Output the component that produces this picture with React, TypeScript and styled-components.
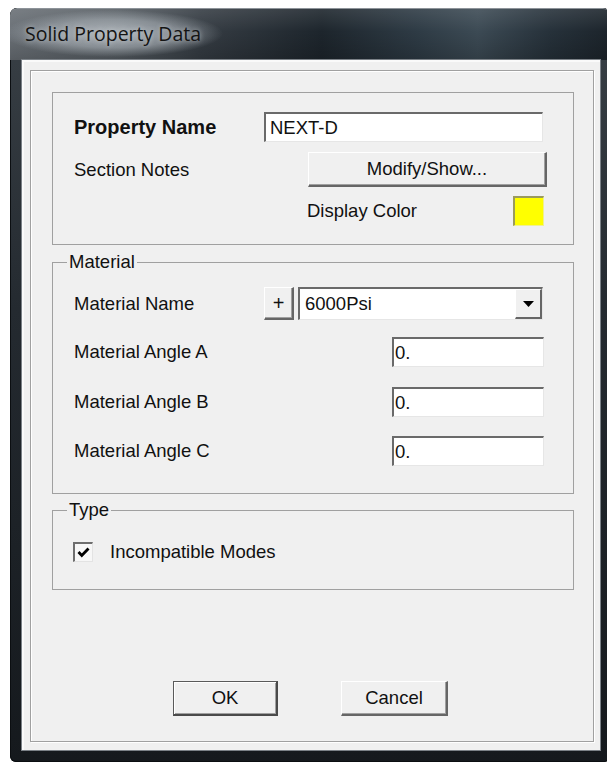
import React from 'react';
import styled, { createGlobalStyle } from 'styled-components';

const GlobalStyle = createGlobalStyle`
  html, body {
    margin: 0;
    padding: 0;
    background: #fff;
    overflow: hidden;
  }
  body {
    font-family: "Liberation Sans", Arial, sans-serif;
    color: #111;
  }
`;

const Window = styled.div`
  display: flex;
  flex-direction: column;
  width: 600px;
  height: 754px;
  margin: 8px 0 0 10px;
  border-radius: 7px 7px 6px 6px;
  background: linear-gradient(to bottom, #3a4147 0%, #242a30 40%, #15191d 100%);
  box-shadow: inset 0 0 0 1px #0b0e11;
  overflow: hidden;
`;

const TitleBar = styled.div`
  flex-shrink: 0;
  height: 52px;
  box-sizing: border-box;
  display: flex;
  align-items: center;
  padding-left: 15px;
  border-top: 1px solid #8d9399;
  border-radius: 7px 7px 0 0;
  background:
    linear-gradient(to bottom, rgba(255, 255, 255, 0.1), rgba(255, 255, 255, 0) 45%, rgba(0, 0, 0, 0.18)),
    linear-gradient(to right, #6a7076 0%, #565d63 18%, #353c43 32%, #1d252c 52%, #2e3b45 68%, #3c4a54 78%, #26313a 90%, #1c242b 100%);
`;

/* title caption sits on a soft light haze, as the glass frame draws it */
const TitleText = styled.span`
  font-family: "Open Sans", "Noto Sans", sans-serif;
  font-size: 19.5px;
  color: #141414;
  padding: 10px 22px;
  margin-left: -22px;
  margin-top: -2px;
  background: radial-gradient(closest-side, rgba(190, 196, 201, 0.85) 0%, rgba(170, 177, 183, 0.6) 60%, rgba(170, 177, 183, 0) 100%);
  text-shadow: 0 0 5px rgba(205, 210, 214, 0.8);
`;

const Frame = styled.div`
  flex: 1;
  display: flex;
  padding: 0 10px 12px 12px;
`;

const Client = styled.div`
  flex: 1;
  display: flex;
  background: #f0f0f0;
  padding: 10px 6px 8px 8px;
  box-shadow: 0 0 0 1px #7b8187, inset 2px 2px 0 #fafafa;
`;

const Panel = styled.div`
  flex: 1;
  display: flex;
  flex-direction: column;
  border: 1px solid #a0a0a0;
  box-shadow: 1px 1px 0 #fff, inset 1px 1px 0 #fff;
  padding: 21px 19px 25px 21px;
`;

const Group = styled.div`
  display: flex;
  flex-direction: column;
  border: 1px solid #a0a0a0;
  padding: 19px 25px 18px 21px;
`;

const GroupBox = styled.fieldset<{ $top: number; $pt: number; $pb: number }>`
  display: flex;
  flex-direction: column;
  min-inline-size: 0;
  margin: ${p => p.$top}px 0 0 0;
  border: 1px solid #a0a0a0;
  padding: ${p => p.$pt}px 25px ${p => p.$pb}px 21px;
`;

const Legend = styled.legend`
  font-size: 18.5px;
  line-height: 20px;
  padding: 0 2px;
  margin-left: -7px;
`;

const Row = styled.div<{ $h: number; $gap?: number }>`
  display: flex;
  align-items: center;
  height: ${p => p.$h}px;
  margin-top: ${p => p.$gap ?? 0}px;
`;

const Label = styled.span<{ $w?: number; $bold?: boolean }>`
  flex: ${p => (p.$w ? `0 0 ${p.$w}px` : '1')};
  font-size: ${p => (p.$bold ? 20 : 18.5)}px;
  font-weight: ${p => (p.$bold ? 700 : 400)};
  white-space: nowrap;
`;

const Field = styled.div<{ $w: number; $pad?: number }>`
  width: ${p => p.$w}px;
  height: 100%;
  box-sizing: border-box;
  display: flex;
  align-items: center;
  margin-right: 4px;
  padding-left: ${p => p.$pad ?? 4}px;
  background: #fff;
  border-top: 2px solid #6a6a6a;
  border-left: 2px solid #6a6a6a;
  border-right: 1px solid #e6e6e6;
  border-bottom: 1px solid #e6e6e6;
  font-size: 18.5px;
  white-space: nowrap;
`;

const Button = styled.button<{ $w: number; $h?: number; $ml?: number; $fs?: number; $default?: boolean }>`
  width: ${p => p.$w}px;
  height: ${p => (p.$h ? `${p.$h}px` : '100%')};
  margin: 0 0 0 ${p => p.$ml ?? 0}px;
  box-sizing: border-box;
  padding: 0;
  display: flex;
  align-items: center;
  justify-content: center;
  font-family: inherit;
  font-size: ${p => p.$fs ?? 18.5}px;
  color: #111;
  background: #f0f0f0;
  border-style: solid;
  border-width: 1px 2px 2px 1px;
  border-color: ${p => (p.$default ? '#5a5a5a #4a4a4a #4a4a4a #5a5a5a' : '#fff #666 #666 #fff')};
  box-shadow: ${p =>
    p.$default ? 'inset 1px 1px 0 #fff, inset -1px -1px 0 #a0a0a0' : 'inset -1px -1px 0 #a0a0a0'};
`;

const Swatch = styled.div<{ $color: string }>`
  width: 31px;
  height: 30px;
  box-sizing: border-box;
  margin-right: 4px;
  background: ${p => p.$color};
  border-top: 2px solid #9a9a5c;
  border-left: 2px solid #9a9a5c;
  border-right: 1px solid #f0f090;
  border-bottom: 1px solid #f0f090;
`;

const Combo = styled(Field)`
  padding-left: 5px;
  margin-left: 4px;
`;

const ComboText = styled.span`
  flex: 1;
`;

const ArrowButton = styled.div`
  width: 27px;
  height: 100%;
  box-sizing: border-box;
  display: flex;
  align-items: center;
  justify-content: center;
  background: #f0f0f0;
  border-style: solid;
  border-width: 1px 2px 2px 1px;
  border-color: #fff #666 #666 #fff;
`;

const CheckBox = styled.div`
  width: 20px;
  height: 20px;
  box-sizing: border-box;
  margin-left: -1px;
  display: flex;
  align-items: center;
  justify-content: center;
  background: #f7f7f7;
  border-top: 2px solid #6e6e6e;
  border-left: 2px solid #6e6e6e;
  border-right: 1px solid #e3e3e3;
  border-bottom: 1px solid #e3e3e3;
`;

const CheckLabel = styled.span`
  margin-left: 17px;
  font-size: 18.5px;
`;

const Actions = styled.div`
  display: flex;
  justify-content: center;
  gap: 63px;
  padding-right: 5px;
  margin-top: auto;
`;

const App = () => {
  return (
    <>
      <GlobalStyle />
      <Window>
        <TitleBar>
          <TitleText>Solid Property Data</TitleText>
        </TitleBar>
        <Frame>
          <Client>
            <Panel>
              <Group>
                <Row $h={30}>
                  <Label $w={190} $bold>Property Name</Label>
                  <Field $w={279}>NEXT-D</Field>
                </Row>
                <Row $h={35} $gap={10}>
                  <Label $w={190}>Section Notes</Label>
                  <Button $w={239} $ml={44}>Modify/Show...</Button>
                </Row>
                <Row $h={30} $gap={9}>
                  <Label $w={233} />
                  <Label>Display Color</Label>
                  <Swatch $color="#ffff00" />
                </Row>
              </Group>

              <GroupBox $top={7} $pt={15} $pb={27}>
                <Legend>Material</Legend>
                <Row $h={33}>
                  <Label $w={190}>Material Name</Label>
                  <Button $w={30} $fs={20}>+</Button>
                  <Combo $w={245}>
                    <ComboText>6000Psi</ComboText>
                    <ArrowButton>
                      <svg width="11" height="6" viewBox="0 0 11 6">
                        <polygon points="0,0 11,0 5.5,6" fill="#000" />
                      </svg>
                    </ArrowButton>
                  </Combo>
                </Row>
                <Row $h={30} $gap={17}>
                  <Label>Material Angle A</Label>
                  <Field $w={152} $pad={1}>0.</Field>
                </Row>
                <Row $h={30} $gap={20}>
                  <Label>Material Angle B</Label>
                  <Field $w={152} $pad={1}>0.</Field>
                </Row>
                <Row $h={30} $gap={19}>
                  <Label>Material Angle C</Label>
                  <Field $w={152} $pad={1}>0.</Field>
                </Row>
              </GroupBox>

              <GroupBox $top={6} $pt={22} $pb={27}>
                <Legend>Type</Legend>
                <Row $h={20}>
                  <CheckBox>
                    <svg width="13" height="11" viewBox="0 0 13 11">
                      <polyline points="1.5,5 4.8,8.5 11.5,1.5" fill="none" stroke="#000" strokeWidth="2.8" />
                    </svg>
                  </CheckBox>
                  <CheckLabel>Incompatible Modes</CheckLabel>
                </Row>
              </GroupBox>

              <Actions>
                <Button $w={105} $h={35} $default>OK</Button>
                <Button $w={107} $h={35}>Cancel</Button>
              </Actions>
            </Panel>
          </Client>
        </Frame>
      </Window>
    </>
  );
};

export default App;
